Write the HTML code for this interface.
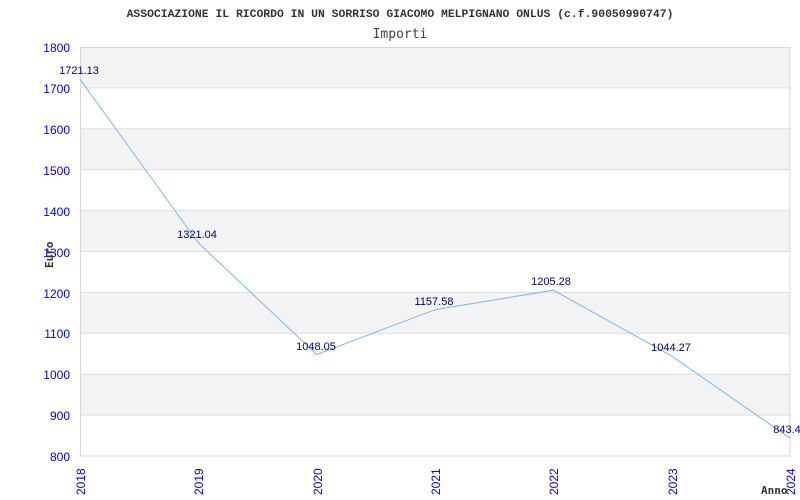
<!DOCTYPE html>
<html><head><style>body{margin:0;background:#fff}svg{display:block}</style></head><body>
<svg width="800" height="500" xmlns="http://www.w3.org/2000/svg" font-family="Liberation Sans, sans-serif">
<rect width="800" height="500" fill="#fff"/>
<text x="400" y="17" text-anchor="middle" font-family="Liberation Mono, monospace" font-weight="bold" font-size="11.4" fill="#333">ASSOCIAZIONE IL RICORDO IN UN SORRISO GIACOMO MELPIGNANO ONLUS (c.f.90050990747)</text>
<text x="400" y="38" text-anchor="middle" font-family="DejaVu Sans Mono, monospace" font-size="13" fill="#444">Importi</text>
<g fill="#f3f3f3">
<rect x="80" y="47" width="710" height="40.9"/>
<rect x="80" y="128.8" width="710" height="40.9"/>
<rect x="80" y="210.6" width="710" height="40.9"/>
<rect x="80" y="292.4" width="710" height="40.9"/>
<rect x="80" y="374.2" width="710" height="40.9"/>
</g>
<g stroke="#ddd" stroke-width="1">
<line x1="80" y1="87.9" x2="790" y2="87.9"/><line x1="80" y1="128.8" x2="790" y2="128.8"/>
<line x1="80" y1="169.7" x2="790" y2="169.7"/><line x1="80" y1="210.6" x2="790" y2="210.6"/>
<line x1="80" y1="251.5" x2="790" y2="251.5"/><line x1="80" y1="292.4" x2="790" y2="292.4"/>
<line x1="80" y1="333.3" x2="790" y2="333.3"/><line x1="80" y1="374.2" x2="790" y2="374.2"/>
<line x1="80" y1="415.1" x2="790" y2="415.1"/>
</g>
<rect x="80.5" y="47.5" width="709.5" height="408.5" fill="none" stroke="#d8d8d8"/>
<g fill="#00f" font-size="12" text-anchor="end">
<text x="70" y="52">1800</text><text x="70" y="93">1700</text><text x="70" y="134">1600</text>
<text x="70" y="175">1500</text><text x="70" y="216">1400</text><text x="70" y="257">1300</text>
<text x="70" y="298">1200</text><text x="70" y="338">1100</text><text x="70" y="379">1000</text>
<text x="70" y="420">900</text><text x="70" y="461">800</text>
</g>
<g fill="#00f" font-size="12">
<text transform="translate(85,495) rotate(-90)">2018</text>
<text transform="translate(203,495) rotate(-90)">2019</text>
<text transform="translate(322,495) rotate(-90)">2020</text>
<text transform="translate(440,495) rotate(-90)">2021</text>
<text transform="translate(558,495) rotate(-90)">2022</text>
<text transform="translate(677,495) rotate(-90)">2023</text>
<text transform="translate(795,495) rotate(-90)">2024</text>
</g>
<polyline fill="none" stroke="#7ab8f0" stroke-width="1" points="80,79.3 198.3,242.9 316.7,354.5 435,309.7 553.3,290.2 671.7,356.1 790,438.2"/>
<g fill="#000080" font-size="11" text-anchor="middle">
<text x="79" y="74">1721.13</text><text x="197" y="238">1321.04</text>
<text x="316" y="350">1048.05</text><text x="434" y="305">1157.58</text>
<text x="551" y="285">1205.28</text><text x="671" y="351">1044.27</text>
<text x="787" y="433">843.4</text>
</g>
<text transform="translate(53,268) rotate(-90)" font-family="DejaVu Sans Mono, monospace" font-weight="bold" font-size="11" fill="#333">Euro</text>
<text x="761" y="494" font-family="DejaVu Sans Mono, monospace" font-weight="bold" font-size="11" fill="#333">Anno</text>
</svg>
</body></html>
